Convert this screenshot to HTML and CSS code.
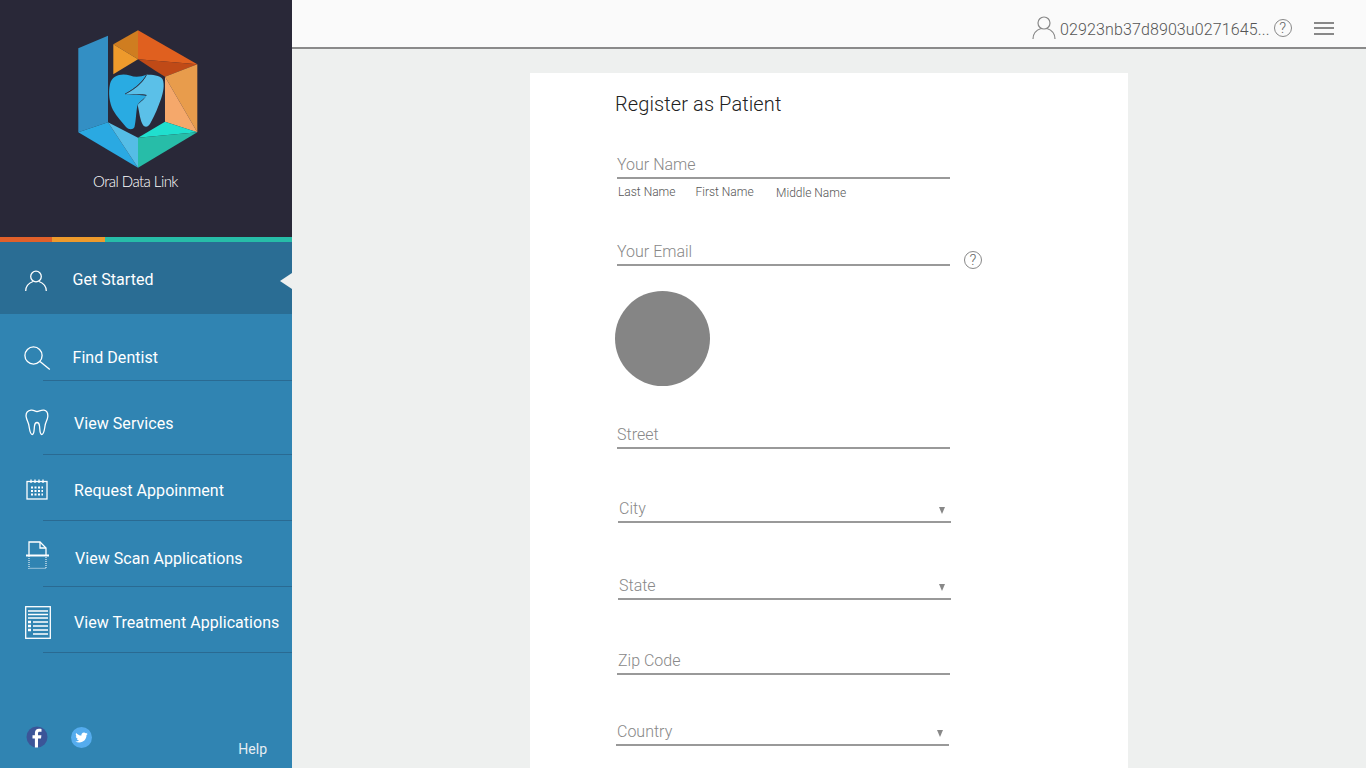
FILE: index.html
```html
<!DOCTYPE html>
<html>
  <head>
    <meta charset="UTF-8">
    <meta name="viewport" content="width=device-width,initial-scale=1">
    <title>Oral Data Link</title>
    <link rel="stylesheet" href="styles.css">
  </head>
  <body>
    <aside class="sidebar">
      <div class="brand">
        <svg class="brand-mark" width="122" height="140" viewBox="77 29 122 140">
          <polygon fill="#338fc4" points="78.3,48.3 108,35.7 108,122.3 78.3,132.3"/>
          <polygon fill="#cf7d20" points="113.3,44.3 138,30.3 138,59.3"/>
          <polygon fill="#ee9a2c" points="113.3,44.3 138,59.3 113.3,74.3"/>
          <polygon fill="#e0601f" points="138,30.3 197.3,64.3 138,59.3"/>
          <polygon fill="#c04a17" points="138,59.3 197.3,64.3 165,76.7 155,70.5"/>
          <polygon fill="#e89c4c" points="197.3,64.3 197.3,132.3 165,76.7"/>
          <polygon fill="#f5a86b" points="165,76.7 197.3,132.3 165,121.7"/>
          <polygon fill="#20dfce" points="165,121.7 197.3,132.3 138,137.7"/>
          <polygon fill="#27bda8" points="138,137.7 197.3,132.3 138,167.7"/>
          <polygon fill="#2aa9e2" points="78.3,132.3 108,122.3 138,167.7"/>
          <polygon fill="#55bde6" points="108,122.3 138,137.7 138,167.7"/>
          <path fill="#29abe2" d="M146.7 74.5C141 77 135 77.5 130 75.5C122 73 112 75 110 84C108 93 109.5 103 113 110C117 117 122 122 126 127C129 130 133 130 134.5 127C136 121 136 112 137.5 105C139 102 142 100 146.7 96C141 94.5 132 95 125 94C132 90 141 84 146.7 74.5Z"/>
          <path fill="#5bc0e8" d="M146.7 74.5C152 75 160 75 162.5 79C165 85 163 93 161 99C158 107 155 115 151 122C149 127 145 128 143 125C140 120 139.5 113 137.7 105C140 102 145 99 146.7 95C141 93.5 131 95 125 94C133 90 142 84 146.7 74.5Z"/>
          <path fill="none" stroke="#292838" stroke-width="0.8" d="M146.7 74.5C142 84 133 90 125 94"/>
        </svg>
        <div class="brand-name">Oral Data Link</div>
      </div>
      <div class="stripe">
        <span class="stripe-red"></span>
        <span class="stripe-orange"></span>
        <span class="stripe-teal"></span>
      </div>

      <nav class="nav">
        <a class="nav-row nav-active">
          <span class="nav-icon">
            <svg class="icon-person" width="22" height="21" viewBox="0 0 22 21"><circle cx="11" cy="6.5" r="5.3"/><path d="M0.7 21C0.7 16 4 13 8 11.5M21.3 21C21.3 16 18 13 14 11.5"/></svg>
          </span>
          <span class="nav-text text-a">Get Started</span>
        </a>

        <a class="nav-row row-find">
          <span class="nav-icon">
            <svg class="icon-search" width="27" height="26" viewBox="0 0 27 26"><circle cx="9.5" cy="9.5" r="8.6"/><path d="M16 15.5L25.8 23.5"/></svg>
          </span>
          <span class="nav-text text-a">Find Dentist</span>
        </a>
        <div class="nav-line"></div>

        <a class="nav-row row-services">
          <span class="nav-icon">
            <svg class="icon-tooth" width="24" height="27" viewBox="0 0 24 27"><path d="M6 1.2C9 0.8 10 2.5 12 2.5C14 2.5 16 0.7 19 1.2C22 1.8 23 4.5 22.8 7.5C22.5 11 20.5 13 20 17C19.5 20 19 25.5 16.8 25.5C14.5 25.5 15 20 14.5 17C14.2 14.5 13 13.5 12 13.5C11 13.5 9.8 14.5 9.5 17C9 20 9.5 25.5 7.2 25.5C5 25.5 4.5 20 4 17C3.5 13 1.5 11 1.1 7.5C0.8 4.5 2 1.8 6 1.2Z"/></svg>
          </span>
          <span class="nav-text">View Services</span>
        </a>
        <div class="nav-line"></div>

        <a class="nav-row row-request">
          <span class="nav-icon">
            <svg class="icon-calendar" width="22" height="21" viewBox="0 0 22 21">
              <rect x="1" y="2.5" width="20" height="17.5"/>
              <path d="M5 0.5V4M9 0.5V4M13 0.5V4M17 0.5V4"/>
              <path class="dots" d="M5 8.5H17M5 12H17M5 15.5H17"/>
            </svg>
          </span>
          <span class="nav-text">Request Appoinment</span>
        </a>
        <div class="nav-line"></div>

        <a class="nav-row row-scan">
          <span class="nav-icon">
            <svg class="icon-scan" width="23" height="28" viewBox="0 0 23 28">
              <path d="M3 14V1H14L20 7V14"/>
              <path d="M14 1V7H20"/>
              <path class="thick" d="M0 14.5H23"/>
              <path class="dotted" d="M3 15V27.5H20V15"/>
            </svg>
          </span>
          <span class="nav-text text-c">View Scan Applications</span>
        </a>
        <div class="nav-line"></div>

        <a class="nav-row row-treatment">
          <span class="nav-icon">
            <svg class="icon-list" width="26" height="33" viewBox="0 0 26 33">
              <rect x="0.7" y="0.7" width="24.6" height="31.6"/>
              <path d="M3 5H23M3 8.5H23M3 12H23M8 16H23M8 20H23M8 24H23M8 28H23"/>
              <path class="bullets" d="M3 16H6M3 20H6M3 24H6"/>
            </svg>
          </span>
          <span class="nav-text">View Treatment Applications</span>
        </a>
        <div class="nav-line"></div>
      </nav>

      <div class="sidebar-foot">
        <svg class="social" width="22" height="22" viewBox="0 0 22 22">
          <circle cx="11" cy="11" r="10.5" fill="#3b5598"/>
          <path fill="#fff" d="M12 21.5V12.5H15L15.4 9.3H12V7.4C12 6.4 12.4 5.8 13.6 5.8H15.5V3C15 2.9 14 2.8 13 2.8C10.6 2.8 8.9 4.3 8.9 7V9.3H6.5V12.5H8.9V21.4Z"/>
        </svg>
        <svg class="social social-twitter" width="21" height="21" viewBox="0 0 21 21">
          <circle cx="10.5" cy="10.5" r="10.5" fill="#55acee"/>
          <path fill="#fff" transform="translate(4.3 4.3) scale(0.52)" d="M23.95 4.57a10 10 0 01-2.82.77 4.96 4.96 0 002.16-2.72c-.95.55-2 .95-3.12 1.18a4.92 4.92 0 00-8.38 4.48C7.69 8.09 4.07 6.13 1.64 3.16a4.82 4.82 0 00-.67 2.48c0 1.71.87 3.2 2.19 4.1a4.9 4.9 0 01-2.23-.62v.06a4.92 4.92 0 003.95 4.83 5 5 0 01-2.21.08 4.94 4.94 0 004.6 3.42A9.87 9.87 0 010 19.54a14 14 0 007.56 2.21c9.05 0 14-7.5 14-13.98 0-.21 0-.42-.02-.63a9.94 9.94 0 002.46-2.55z"/>
        </svg>
        <span class="help">Help</span>
      </div>
    </aside>

    <div class="main">
      <header class="topbar">
        <svg class="top-person" width="24" height="23" viewBox="0 0 24 23"><circle cx="12" cy="7" r="6"/><path d="M1 23C1 17.5 4.5 14 9 12.5M23 23C23 17.5 19.5 14 15 12.5"/></svg>
        <span class="account">02923nb37d8903u0271645...</span>
        <span class="hint top-hint">?</span>
        <span class="burger"><i></i><i></i><i></i></span>
      </header>

      <section class="card">
        <h1 class="title">Register as Patient</h1>

        <div class="field field-name"><span>Your Name</span></div>
        <div class="sublabels">
          <span class="sub-last">Last Name</span>
          <span class="sub-first">First Name</span>
          <span class="sub-middle">Middle Name</span>
        </div>

        <div class="email-row">
          <div class="field field-email"><span>Your Email</span></div>
          <span class="hint email-hint">?</span>
        </div>

        <div class="avatar"></div>

        <div class="field field-street"><span>Street</span></div>
        <div class="field field-city"><span>City</span><b class="caret"></b></div>
        <div class="field field-state"><span>State</span><b class="caret"></b></div>
        <div class="field field-zip"><span>Zip Code</span></div>
        <div class="field field-country"><span>Country</span><b class="caret"></b></div>
      </section>
    </div>
  </body>
</html>
```

FILE: styles.css
```css
html, body {
  height: 100%;
}
body {
  display: flex;
  margin: 0;
  overflow: hidden;
  background-color: #eef0ef;
  font-family: Roboto, "Liberation Sans", sans-serif;
}

/* sidebar */
.sidebar {
  display: flex;
  flex-direction: column;
  flex: none;
  width: 292px;
  height: 768px;
  background-color: #3084b2;
}
.brand {
  display: flex;
  flex-direction: column;
  align-items: center;
  flex: none;
  height: 237px;
  box-sizing: border-box;
  padding-top: 29px;
  background-color: #292838;
}
.brand-mark {
  display: block;
  margin-left: -16px;
}
.brand-name {
  margin-top: 3px;
  margin-left: -21px;
  font-family: Lato, sans-serif;
  font-size: 15px;
  font-weight: 300;
  line-height: 18px;
  letter-spacing: -0.55px;
  color: #fff;
}
.stripe {
  display: flex;
  flex: none;
  height: 5px;
}
.stripe-red {
  width: 52px;
  background-color: #e0602a;
}
.stripe-orange {
  width: 53px;
  background-color: #ee9a2c;
}
.stripe-teal {
  flex: 1;
  background-color: #27bda8;
}

/* nav */
.nav-row {
  display: flex;
  align-items: center;
  box-sizing: border-box;
  height: 65px;
  padding-left: 25px;
  font-size: 16px;
  color: #fff;
}
.nav-icon {
  display: flex;
  flex: none;
  width: 49px;
}
.nav-text {
  letter-spacing: 0.05px;
}
.text-a {
  margin-left: -1.5px;
}
.text-c {
  margin-left: 1px;
}
.nav-active {
  position: relative;
  height: 72px;
  padding-top: 2px;
  background-color: #2a6d94;
}
.nav-active::after {
  content: "";
  position: absolute;
  top: 31px;
  right: 0;
  border-top: 8px solid transparent;
  border-bottom: 8px solid transparent;
  border-right: 12px solid #eef0ef;
}
.row-find {
  height: 66px;
  padding-top: 20px;
}
.row-services {
  height: 73px;
  padding-top: 11px;
}
.row-request {
  padding-top: 5px;
}
.row-scan {
  padding-top: 9px;
}
.row-treatment {
  padding-top: 5px;
}
.nav-line {
  height: 1px;
  margin-left: 43px;
  background-color: #2a6a92;
}
.nav-icon svg {
  display: block;
  fill: none;
  stroke: #fff;
  stroke-width: 1.3;
}
.icon-person {
  margin-top: 3px;
}
.icon-search {
  margin-left: -1px;
  margin-top: 3px;
  stroke-width: 1.4;
}
.icon-tooth {
  margin-top: -2px;
  stroke-width: 1.4;
}
.icon-calendar {
  margin-left: 1px;
  margin-top: -2px;
}
.icon-calendar .dots {
  stroke-width: 2;
  stroke-dasharray: 2 1.5;
}
.icon-scan {
  margin-left: 1px;
  margin-top: -7px;
}
.icon-scan .thick {
  stroke-width: 2;
}
.icon-scan .dotted {
  stroke-dasharray: 1 1;
  opacity: 0.8;
}
.icon-list {
  stroke-width: 1.4;
}
.icon-list path {
  stroke-width: 1.3;
}
.icon-list .bullets {
  stroke-width: 2.4;
}
.sidebar-foot {
  display: flex;
  align-items: flex-start;
  flex: none;
  margin-top: auto;
  height: 42px;
  padding-left: 26px;
}
.social {
  display: block;
}
.social-twitter {
  margin-left: 23px;
  margin-top: 1px;
}
.help {
  margin-left: auto;
  margin-right: 25px;
  margin-top: 15px;
  font-size: 14px;
  line-height: 16px;
  color: #e6edf2;
}

/* main */
.main {
  flex: 1;
  display: flex;
  flex-direction: column;
  min-width: 0;
}
.topbar {
  display: flex;
  align-items: center;
  flex: none;
  height: 47px;
  padding-left: 740px;
  background-color: #fafafa;
  border-bottom: 2px solid #8a8a8a;
  font-weight: 300;
  color: #555;
}
.top-person {
  flex: none;
  margin-top: 8px;
  fill: none;
  stroke: #888;
  stroke-width: 1.2;
}
.account {
  margin-left: 4px;
  margin-top: 11px;
  font-size: 16px;
  letter-spacing: 0.12px;
  white-space: nowrap;
}
.hint {
  display: flex;
  align-items: center;
  justify-content: center;
  flex: none;
  box-sizing: border-box;
  width: 18px;
  height: 18px;
  border: 1px solid #888;
  border-radius: 50%;
  font-size: 15px;
  font-weight: 300;
  color: #666;
}
.top-hint {
  margin-left: 4px;
  margin-top: 9px;
}
.burger {
  display: flex;
  flex-direction: column;
  gap: 3.5px;
  margin-left: 22px;
  margin-top: 9px;
}
.burger i {
  display: block;
  width: 20px;
  height: 2px;
  background-color: #888;
}

/* form */
.card {
  flex: 1;
  width: 598px;
  box-sizing: border-box;
  margin-top: 24px;
  margin-left: 238px;
  padding-top: 19px;
  padding-left: 85px;
  background-color: #fff;
  overflow: hidden;
}
.title {
  margin: 0;
  font-size: 20px;
  font-weight: 300;
  line-height: 24px;
  letter-spacing: 0.1px;
  color: #222;
}
.field {
  display: flex;
  justify-content: space-between;
  align-items: center;
  box-sizing: border-box;
  width: 333px;
  height: 25px;
  margin-left: 2px;
  padding-bottom: 3px;
  border-bottom: 2px solid #999;
  font-size: 16px;
  font-weight: 300;
  color: #888;
}
.caret {
  width: 0;
  height: 0;
  margin-top: 5px;
  margin-right: 6px;
  border-left: 3.5px solid transparent;
  border-right: 3.5px solid transparent;
  border-top: 7px solid #888;
}
.field-name {
  margin-top: 38px;
}
.sublabels {
  display: flex;
  height: 16px;
  margin-top: 5px;
  font-size: 12px;
  font-weight: 300;
  line-height: 16px;
  color: #555;
}
.sub-last {
  margin-left: 3px;
}
.sub-first {
  margin-left: 20px;
}
.sub-middle {
  margin-left: 22.5px;
  margin-top: 1px;
}
.email-row {
  display: flex;
  align-items: flex-start;
  margin-top: 41px;
}
.email-hint {
  margin-left: 14px;
  margin-top: 10px;
}
.avatar {
  width: 95px;
  height: 95px;
  margin-top: 22px;
  border-radius: 50%;
  background-color: #858585;
}
.field-street {
  margin-top: 38px;
}
.field-city {
  margin-top: 49px;
  margin-left: 3px;
  padding-left: 1px;
}
.field-state {
  margin-top: 52px;
  margin-left: 3px;
  padding-left: 1px;
}
.field-zip {
  margin-top: 50px;
  padding-left: 1px;
}
.field-country {
  margin-top: 46px;
  margin-left: 1px;
  padding-left: 1px;
}
```
